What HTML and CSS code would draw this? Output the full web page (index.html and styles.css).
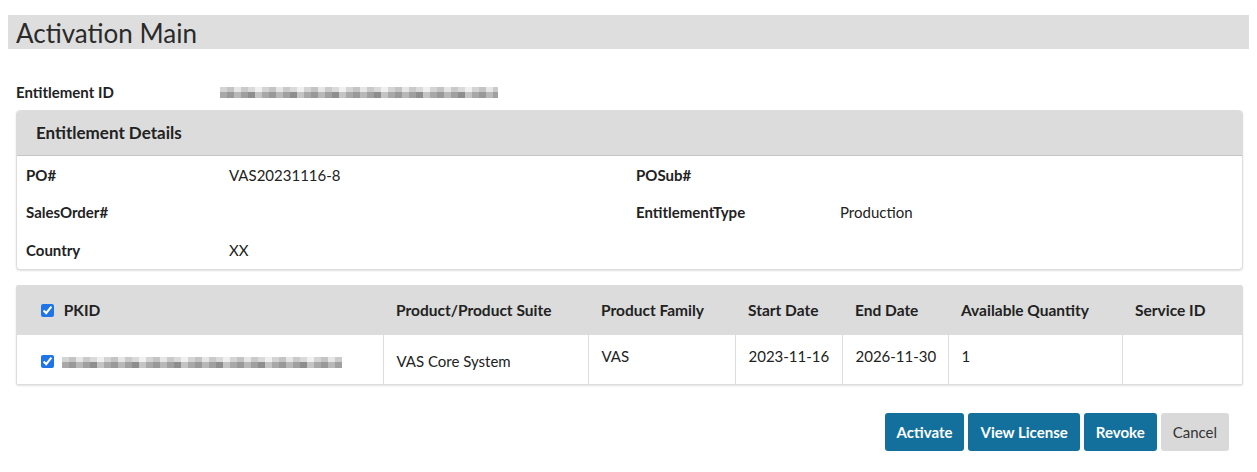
FILE: index.html
```html
<!DOCTYPE html>
<html lang="en">
    <head>
        <meta charset="UTF-8">
        <meta name="viewport" content="width=device-width, initial-scale=1.0">
        <title>Activation Main</title>
        <link rel="stylesheet" href="styles.css">
    </head>
    <body>
        <h1 class="page-title">Activation Main</h1>

        <div class="content">
            <div class="ent-id">
                <span class="ent-id-label">Entitlement ID</span>
                <span class="blur blur-id"></span>
            </div>

            <div class="panel">
                <div class="panel-heading">Entitlement Details</div>
                <div class="details">
                    <span class="lbl">PO#</span><span>VAS20231116-8</span>
                    <span class="lbl">POSub#</span><span></span>
                    <span class="lbl">SalesOrder#</span><span></span>
                    <span class="lbl">EntitlementType</span><span>Production</span>
                    <span class="lbl">Country</span><span>XX</span>
                    <span></span><span></span>
                </div>
            </div>

            <div class="panel table-panel">
                <table class="grid">
                    <colgroup>
                        <col style="width:366px">
                        <col style="width:205px">
                        <col style="width:147px">
                        <col style="width:107px">
                        <col style="width:106px">
                        <col style="width:174px">
                        <col>
                    </colgroup>
                    <thead>
                        <tr>
                            <th class="pk"><input type="checkbox" checked> PKID</th>
                            <th>Product/Product Suite</th>
                            <th>Product Family</th>
                            <th>Start Date</th>
                            <th>End Date</th>
                            <th>Available Quantity</th>
                            <th>Service ID</th>
                        </tr>
                    </thead>
                    <tbody>
                        <tr>
                            <td class="pk mid"><input type="checkbox" checked><span class="blur blur-pk"></span></td>
                            <td class="mid">VAS Core System</td>
                            <td>VAS</td>
                            <td>2023-11-16</td>
                            <td>2026-11-30</td>
                            <td>1</td>
                            <td></td>
                        </tr>
                    </tbody>
                </table>
            </div>

            <div class="actions">
                <button class="btn btn-primary" type="button">Activate</button>
                <button class="btn btn-primary" type="button">View License</button>
                <button class="btn btn-primary" type="button">Revoke</button>
                <button class="btn btn-default" type="button">Cancel</button>
            </div>
        </div>
    </body>
</html>
```

FILE: styles.css
```css
body { margin: 8px; font-family: Lato, "Open Sans", sans-serif; font-size: 15px; color: #222; background: #fff; }

.page-title { margin: 7px 0 0; padding: 0 8px; height: 34px; line-height: 36px; background: #dedede; font-size: 26px; font-weight: 400; color: #2a2a2a; }

.content { padding: 0 6px 0 8px; }

.ent-id { display: flex; align-items: center; height: 22px; margin-top: 32px; }
.ent-id-label { width: 204px; font-weight: 700; }

.blur { display: inline-block; height: 11px;
    background:
        repeating-linear-gradient(90deg, #d4d4d4 0 7px, #c4c4c4 7px 14px, #e6e6e6 14px 21px, #cacaca 21px 28px, #dadada 28px 35px, #f0f0f0 35px 42px) top / 100% 5px no-repeat,
        repeating-linear-gradient(90deg, #a8a8a8 0 7px, #999 7px 14px, #b8b8b8 14px 21px, #a0a0a0 21px 28px, #8e8e8e 28px 35px, #c4c4c4 35px 42px) bottom / 100% 6px no-repeat; }
.blur-id { width: 278px; }
.blur-pk { width: 280px; margin-left: 2px; vertical-align: middle; }

.panel { margin-top: 7px; border: 1px solid #ddd; border-radius: 4px; background: #fff; box-shadow: 0 1px 2px rgba(0, 0, 0, 0.12); overflow: hidden; }
.panel-heading { height: 44px; line-height: 44px; padding: 0 19px; background: #dcdcdc; border-bottom: 1px solid #c4c4c4; font-size: 17px; font-weight: 700; }

.details { display: grid; grid-template-columns: 203px 407px 204px 1fr; grid-auto-rows: 37.5px; align-items: center; padding: 0 0 0 9px; }
.details .lbl { font-weight: 700; }

.table-panel { margin-top: 15px; border-radius: 2px; }
.grid { width: 100%; border-collapse: collapse; table-layout: fixed; }
.grid tr { height: 49px; }
.grid th { padding: 0 13px; text-align: left; background: #dcdcdc; font-size: 15.5px; font-weight: 700; white-space: nowrap; }
.grid td { padding: 12px 13px 0; vertical-align: top; border-left: 1px solid #ddd; white-space: nowrap; }
.grid td:first-child { border-left: none; }
.grid td.mid { vertical-align: middle; padding-top: 3px; }
.grid .pk { padding-left: 24px; }
.grid input { width: 13px; height: 13px; margin: 0 6px 0 0; vertical-align: -1px; accent-color: #1f75e8; }

.actions { display: flex; justify-content: flex-end; gap: 4px; margin-top: 28px; padding-right: 14px; }
.btn { height: 38px; padding: 0 12px; border: none; border-radius: 3px; font-family: inherit; font-size: 15px; cursor: pointer; }
.btn-primary { background: #13709c; color: #fff; font-weight: 700; }
.btn-default { background: #d9d9d9; color: #333; }
```
